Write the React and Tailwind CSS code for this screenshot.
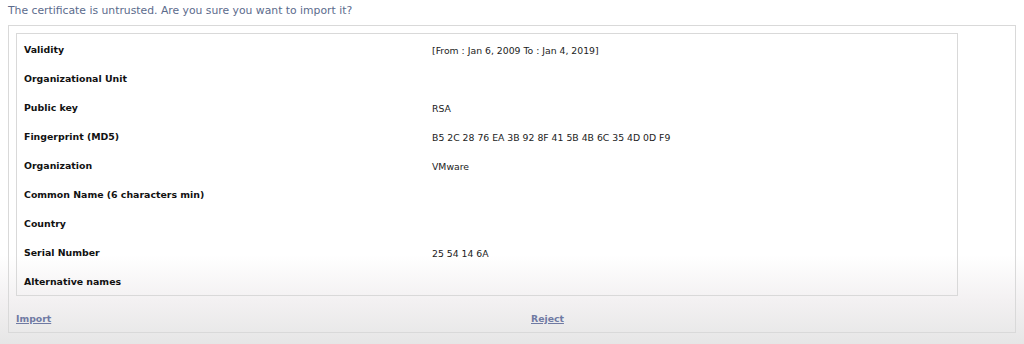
import React from 'react';

const rows = [
	{ label: 'Validity', value: '[From : Jan 6, 2009 To : Jan 4, 2019]' },
	{ label: 'Organizational Unit', value: '' },
	{ label: 'Public key', value: 'RSA' },
	{ label: 'Fingerprint (MD5)', value: 'B5 2C 28 76 EA 3B 92 8F 41 5B 4B 6C 35 4D 0D F9' },
	{ label: 'Organization', value: 'VMware' },
	{ label: 'Common Name (6 characters min)', value: '' },
	{ label: 'Country', value: '' },
	{ label: 'Serial Number', value: '25 54 14 6A' },
	{ label: 'Alternative names', value: '' },
];

export default function App() {
	return (
		<div
			className="w-[1024px] h-[344px] overflow-hidden bg-[linear-gradient(to_bottom,#ffffff_0px,#ffffff_255px,#f3f1f2_300px,#e6e6e6_344px)]"
			style={{ fontFamily: '"DejaVu Sans", Verdana, sans-serif' }}
		>
			<div className="h-[25px] pl-[8px] pt-[4px] text-[10.8px] leading-[14px] text-[#5b6b8c]">
				The certificate is untrusted. Are you sure you want to import it?
			</div>
			<div className="ml-[8px] w-[1008px] h-[308px] border border-[#d9d9d9] pt-[7px] pl-[7px]">
				<div className="w-[942px] border border-[#d9d9d9]">
					{rows.map((row) => (
						<div key={row.label} className="flex h-[29px] items-center pt-[4px] text-[9.3px] text-[#111]">
							<div className="w-[415px] pl-[7px] font-bold text-[9.4px]">{row.label}</div>
							<div className="flex-1 text-[#222]">{row.value}</div>
						</div>
					))}
				</div>
				<div className="flex h-[44px] items-center pt-[1px] text-[9.3px] font-bold">
					<div className="w-[515px]">
						<a href="#" className="text-[#6f7aa3] underline">Import</a>
					</div>
					<div>
						<a href="#" className="text-[#6f7aa3] underline">Reject</a>
					</div>
				</div>
			</div>
		</div>
	);
}
